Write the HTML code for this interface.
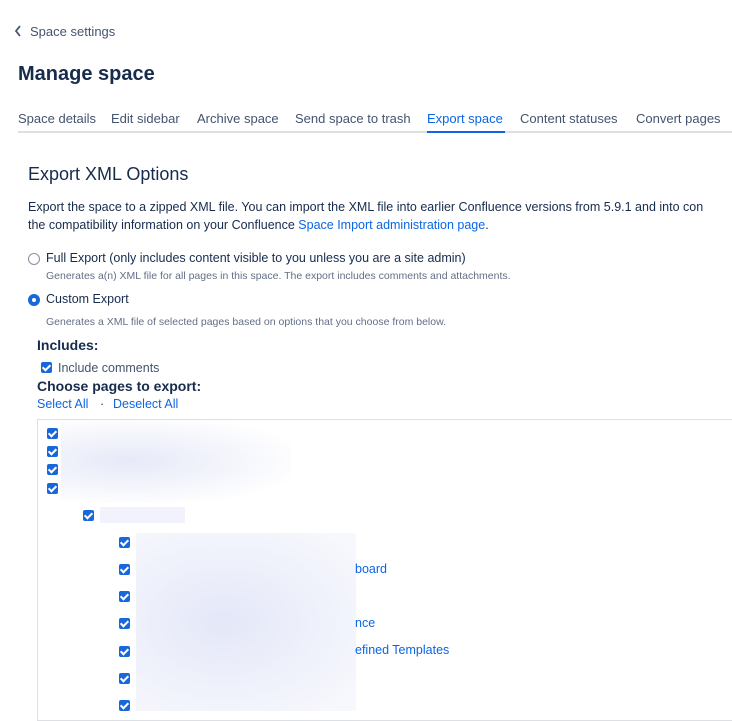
<html><head><style>
body{margin:0;width:732px;height:718px;overflow:hidden;background:#fff;font-family:"Liberation Sans",sans-serif;color:#172b4d;position:relative}
.a{position:absolute;white-space:nowrap}
.cb{position:absolute;width:11px;height:11px;background:#1868db;border-radius:2px}
.cb:after{content:"";position:absolute;left:3px;top:1px;width:3px;height:6px;border:solid #fff;border-width:0 2px 2px 0;transform:rotate(45deg)}
.lk{color:#0c66e4}
.tab{font-size:13px;color:#44546f}
.rad{position:absolute;width:10px;height:10px;border:1px solid #8590a2;border-radius:50%}
.sm{font-size:10.5px;color:#626f86}
</style></head><body>
<svg class="a" style="left:14px;top:25px" width="8" height="12"><path d="M6 1L2 6l4 5" stroke="#44546f" stroke-width="1.8" fill="none"/></svg>
<div class="a" style="left:30px;top:24px;font-size:13px;color:#44546f">Space settings</div>
<div class="a" style="left:18px;top:63px;font-size:20px;font-weight:600">Manage space</div>
<div class="a tab" style="left:18px;top:111px">Space details</div>
<div class="a tab" style="left:111px;top:111px">Edit sidebar</div>
<div class="a tab" style="left:197px;top:111px">Archive space</div>
<div class="a tab" style="left:295px;top:111px">Send space to trash</div>
<div class="a tab" style="left:427px;top:111px;color:#0c66e4">Export space</div>
<div class="a tab" style="left:520px;top:111px">Content statuses</div>
<div class="a tab" style="left:636px;top:111px">Convert pages</div>
<div class="a" style="left:18px;top:131px;width:714px;height:2px;background:#dcdfe4"></div>
<div class="a" style="left:427px;top:131px;width:78px;height:2px;background:#0c66e4"></div>
<div class="a" style="left:28px;top:164px;font-size:18px">Export XML Options</div>
<div class="a" style="left:28px;top:198px;font-size:12.5px;line-height:18px">Export the space to a zipped XML file. You can import the XML file into earlier Confluence versions from 5.9.1 and into con<br>the compatibility information on your Confluence <span class="lk">Space Import administration page</span>.</div>
<div class="rad" style="left:28px;top:253px"></div>
<div class="a" style="left:46px;top:251px;font-size:12.5px">Full Export (only includes content visible to you unless you are a site admin)</div>
<div class="a sm" style="left:46px;top:270px">Generates a(n) XML file for all pages in this space. The export includes comments and attachments.</div>
<div class="rad" style="left:28px;top:294px;border:4px solid #1868db;width:4px;height:4px"></div>
<div class="a" style="left:46px;top:292px;font-size:12.5px">Custom Export</div>
<div class="a sm" style="left:46px;top:316px">Generates a XML file of selected pages based on options that you choose from below.</div>
<div class="a" style="left:37px;top:337px;font-size:14px;font-weight:600">Includes:</div>
<div class="cb" style="left:41px;top:362px"></div>
<div class="a" style="left:58px;top:361px;font-size:12.5px;color:#44546f">Include comments</div>
<div class="a" style="left:37px;top:378px;font-size:14px;font-weight:600">Choose pages to export:</div>
<div class="a lk" style="left:37px;top:397px;font-size:12.5px">Select All</div>
<div class="a" style="left:100px;top:397px;font-size:12.5px">·</div>
<div class="a lk" style="left:113px;top:397px;font-size:12.5px">Deselect All</div>
<div class="a" style="left:37px;top:419px;width:700px;height:300px;border:1px solid #dcdfe4"></div>
<div class="a" style="left:61px;top:420px;width:230px;height:82px;background:radial-gradient(ellipse at 30% 50%,#e6e9f8,#fff 80%)"></div>
<div class="a" style="left:100px;top:507px;width:85px;height:16px;background:#f1f2fb"></div>
<div class="a" style="left:136px;top:533px;width:220px;height:178px;background:radial-gradient(ellipse at 40% 50%,#e4e7f8,#f7f8fd 90%)"></div>
<div class="cb" style="left:47px;top:428px"></div><div class="cb" style="left:47px;top:446px"></div><div class="cb" style="left:47px;top:464px"></div><div class="cb" style="left:47px;top:483px"></div>
<div class="cb" style="left:83px;top:510px"></div>
<div class="cb" style="left:119px;top:537px"></div><div class="cb" style="left:119px;top:564px"></div><div class="cb" style="left:119px;top:591px"></div><div class="cb" style="left:119px;top:618px"></div><div class="cb" style="left:119px;top:646px"></div><div class="cb" style="left:119px;top:673px"></div><div class="cb" style="left:119px;top:700px"></div>
<div class="a lk" style="left:355px;top:562px;font-size:12.5px">board</div>
<div class="a lk" style="left:355px;top:616px;font-size:12.5px">nce</div>
<div class="a lk" style="left:355px;top:643px;font-size:12.5px">efined Templates</div>
</body></html>
